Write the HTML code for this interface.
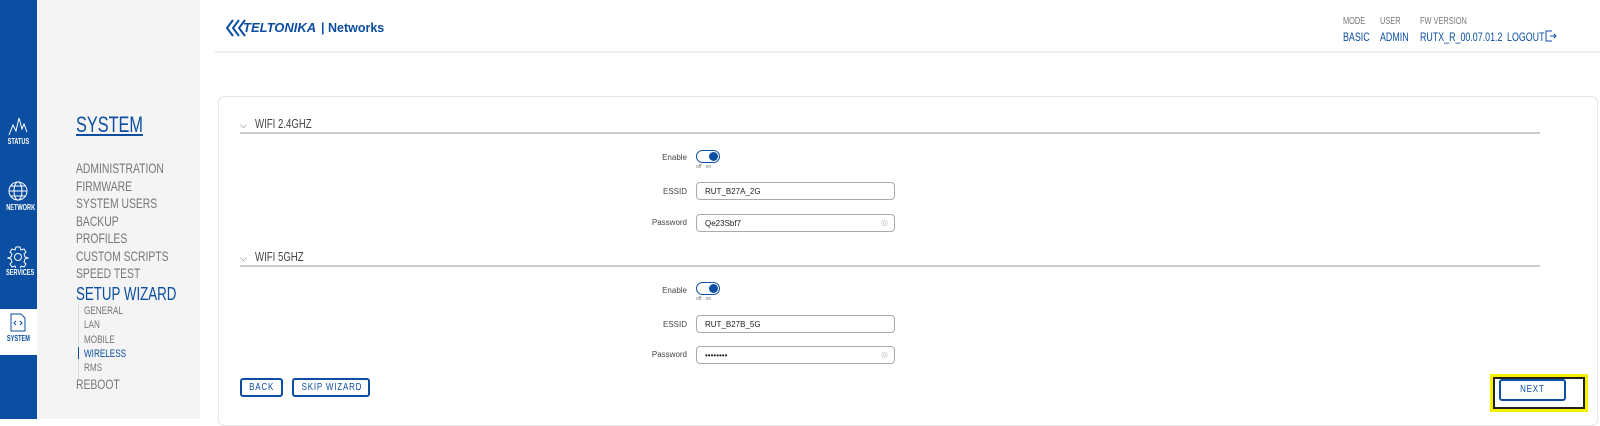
<!DOCTYPE html>
<html><head><meta charset="utf-8"><style>
*{margin:0;padding:0;box-sizing:border-box}
body{width:1600px;height:419px;overflow:hidden;background:#fff;font-family:"Liberation Sans",sans-serif;position:relative}
.abs{position:absolute;white-space:nowrap}
.n{display:inline-block;transform:scaleX(.74);transform-origin:0 0;white-space:nowrap}
.nav{left:0;top:0;width:37px;height:419px;background:#0b4ea2}
.navw{left:0;top:309px;width:37px;height:46px;background:#fff}
.gray{left:37px;top:0;width:163px;height:419px;background:#f4f4f4}
.ni{color:#fff;font-size:8px;width:37px;text-align:center;font-weight:bold}
.ni span{display:inline-block;transform:scaleX(.7)}
.menu{left:76px;color:#777;font-size:14px;line-height:17.5px}
.sub{font-size:11px;line-height:14.3px;color:#777}
.blue{color:#0b4ea2}
.hdr{left:215px;top:51px;width:1385px;height:2px;background:#eee}
.card{left:218px;top:96px;width:1380px;height:330px;border:1px solid #e6e6e6;border-radius:6px}
.sec{left:240px;width:1300px;border-bottom:2px solid #ccc;height:18px;font-size:13px;color:#444}
.lbl{font-size:8px;color:#444;text-align:right;width:90px;left:597px}
.inp{left:696px;width:199px;height:18px;border:1px solid #aaa;border-radius:4px;font-size:8px;color:#222;padding:4px 0 0 8px}
.tg{left:696px;width:24px;height:13px;border:1px solid #0b4ea2;border-radius:7px}
.tg i{position:absolute;right:1px;top:1px;width:9px;height:9px;border-radius:50%;background:#0b4ea2}
.oo{left:696px;font-size:5px;color:#777}
.btn{height:19px;border:2px solid #0b4ea2;border-radius:3px;color:#0b4ea2;font-size:10px;text-align:center;line-height:15px}
.btn span{display:inline-block;transform:scaleX(.8);letter-spacing:1px}
</style></head><body>
<div class="abs nav"></div><div class="abs navw"></div>
<div class="abs gray"></div>
<svg class="abs" style="left:8px;top:116px" width="20" height="20" viewBox="0 0 20 20" fill="none" stroke="#fff" stroke-width="1"><path d="M1 19 L5 9 L8 15 L11 2 L14 13 L16 8 L19 16"/></svg>
<div class="abs ni" style="top:137px"><span>STATUS</span></div>
<svg class="abs" style="left:8px;top:181px" width="20" height="20" viewBox="0 0 20 20" fill="none" stroke="#fff" stroke-width="1"><circle cx="10" cy="10" r="9"/><ellipse cx="10" cy="10" rx="4" ry="9"/><path d="M1 10h18M3 5h14M3 15h14"/></svg>
<div class="abs ni" style="top:203px"><span>NETWORK</span></div>
<svg class="abs" style="left:7px;top:246px" width="22" height="22" viewBox="0 0 22 22" fill="none" stroke="#fff" stroke-width="1"><circle cx="11" cy="11" r="3.5"/><path d="M9 1h4l1 3 3-1 2 3-2 2 1 3 3 1-3 1-1 3 2 2-2 3-3-1-1 3H9l-1-3-3 1-2-3 2-2-1-3-3-1 3-1 1-3-2-2 2-3 3 1z"/></svg>
<div class="abs ni" style="top:268px"><span>SERVICES</span></div>
<svg class="abs" style="left:10px;top:313px" width="16" height="19" viewBox="0 0 16 19" fill="none" stroke="#0b4ea2" stroke-width="1"><path d="M1 1h10l4 4v13H1z"/><path d="M6 8l-2 2 2 2M10 8l2 2-2 2"/></svg>
<div class="abs ni" style="top:334px;color:#0b4ea2"><span>SYSTEM</span></div>

<div class="abs menu blue" style="top:113px;font-size:22px;line-height:24px"><span class="n" style="text-decoration:underline">SYSTEM</span></div>
<div class="abs menu" style="top:160px"><span class="n">ADMINISTRATION<br>FIRMWARE<br>SYSTEM USERS<br>BACKUP<br>PROFILES<br>CUSTOM SCRIPTS<br>SPEED TEST</span></div>
<div class="abs menu blue" style="top:285px;font-size:18px;line-height:18px"><span class="n">SETUP WIZARD</span></div>
<div class="abs" style="left:78px;top:304px;width:1px;height:76px;background:#ddd"></div>
<div class="abs" style="left:78px;top:347px;width:1px;height:12px;background:#0b4ea2"></div>
<div class="abs sub" style="left:84px;top:304px"><span class="n">GENERAL<br>LAN<br>MOBILE<br><span class="blue">WIRELESS</span><br>RMS</span></div>
<div class="abs menu" style="top:376px"><span class="n">REBOOT</span></div>

<svg class="abs" style="left:225px;top:17px" width="24" height="22" viewBox="0 0 24 22" fill="none" stroke="#0b4ea2" stroke-width="2"><path d="M8 3L2 11l6 8M14 3L8 11l6 8M20 3l-6 8 6 8"/></svg>
<div class="abs" style="left:243px;top:20px;font-weight:bold;font-style:italic;font-size:13px;color:#0b4ea2">TELTONIKA</div>
<div class="abs" style="left:321px;top:21px;font-size:12.5px;color:#0b4ea2;font-weight:bold">| Networks</div>

<div class="abs" style="left:1343px;top:16px;font-size:10px;color:#777"><span class="n">MODE</span></div>
<div class="abs" style="left:1380px;top:16px;font-size:10px;color:#777"><span class="n">USER</span></div>
<div class="abs" style="left:1420px;top:16px;font-size:10px;color:#777"><span class="n">FW VERSION</span></div>
<div class="abs blue" style="left:1343px;top:30px;font-size:12px"><span class="n">BASIC</span></div>
<div class="abs blue" style="left:1380px;top:30px;font-size:12px"><span class="n">ADMIN</span></div>
<div class="abs blue" style="left:1420px;top:30px;font-size:12px"><span class="n">RUTX_R_00.07.01.2</span></div>
<div class="abs blue" style="left:1507px;top:30px;font-size:12px"><span class="n">LOGOUT</span></div>
<svg class="abs" style="left:1545px;top:30px" width="12" height="12" viewBox="0 0 12 12" fill="none" stroke="#0b4ea2" stroke-width="1"><path d="M7 1H1v10h6M5 6h6M9 4l2 2-2 2"/></svg>
<div class="abs hdr"></div>

<div class="abs card"></div>
<div class="abs sec" style="top:116px"><span style="color:#555;font-size:9px;margin-right:8px">⌵</span><span class="n">WIFI 2.4GHZ</span></div>
<div class="abs sec" style="top:249px"><span style="color:#555;font-size:9px;margin-right:8px">⌵</span><span class="n">WIFI 5GHZ</span></div>

<div class="abs lbl" style="top:153px">Enable</div>
<div class="abs tg" style="top:150px"><i></i></div>
<div class="abs oo" style="top:164px">off&nbsp;&nbsp;&nbsp;on</div>
<div class="abs lbl" style="top:187px">ESSID</div>
<div class="abs inp" style="top:182px">RUT_B27A_2G</div>
<div class="abs lbl" style="top:218px">Password</div>
<div class="abs inp" style="top:214px">Qe23Sbf7<span style="position:absolute;right:6px;top:3px;color:#bbb">◎</span></div>

<div class="abs lbl" style="top:286px">Enable</div>
<div class="abs tg" style="top:282px"><i></i></div>
<div class="abs oo" style="top:296px">off&nbsp;&nbsp;&nbsp;on</div>
<div class="abs lbl" style="top:320px">ESSID</div>
<div class="abs inp" style="top:315px">RUT_B27B_5G</div>
<div class="abs lbl" style="top:350px">Password</div>
<div class="abs inp" style="top:346px">••••••••<span style="position:absolute;right:6px;top:3px;color:#bbb">◎</span></div>

<div class="abs btn" style="left:240px;top:378px;width:43px"><span>BACK</span></div>
<div class="abs btn" style="left:292px;top:378px;width:78px"><span>SKIP WIZARD</span></div>

<div class="abs" style="left:1490px;top:374px;width:98px;height:38px;background:#f5f000;padding:3px"><div style="width:92px;height:32px;border:2px solid #222;background:#fff"></div></div>
<div class="abs btn" style="left:1499px;top:379px;width:67px;height:22px;line-height:18px"><span>NEXT</span></div>
</body></html>
